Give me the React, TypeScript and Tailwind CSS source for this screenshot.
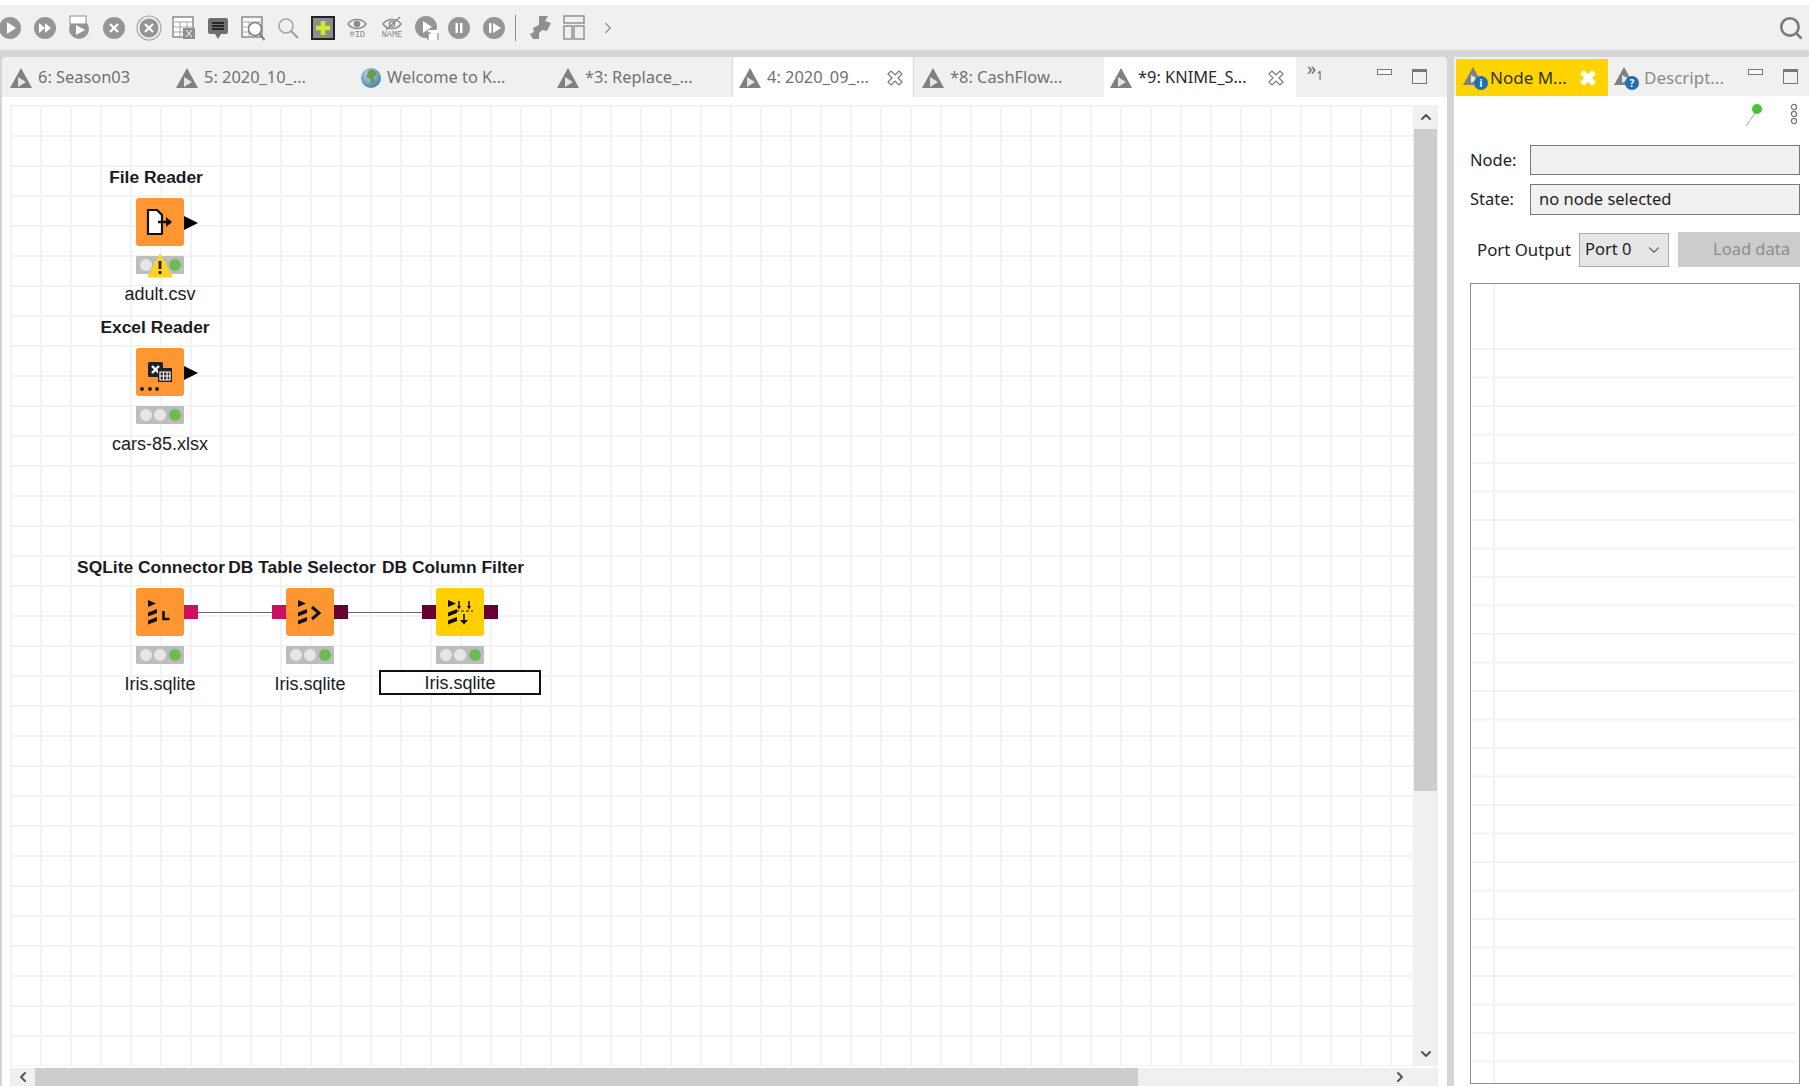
import { ReactNode } from "react";
import { ChevronDown, ChevronLeft, ChevronRight, ChevronUp, Search } from "lucide-react";

function Round({ children }: { children?: ReactNode }) {
  return (
    <svg width="24" height="24" viewBox="0 0 24 24">
      <circle cx="12" cy="12" r="11" fill="#959595" />
      {children}
    </svg>
  );
}

function Sheet({ children }: { children?: ReactNode }) {
  return (
    <svg width="26" height="26" viewBox="0 0 26 26" fill="none">
      <rect x="2" y="2" width="20" height="20" fill="#fff" stroke="#8a8a8a" strokeWidth="1.5" />
      <path d="M2 7h20M2 12h20M2 17h20M9 7v15M16 7v15" stroke="#a5a5a5" />
      {children}
    </svg>
  );
}

function Toolbar() {
  return (
    <div className="h-[45px] bg-[#f0f0f0] flex items-center pl-[1px] pr-[5px] shrink-0">
      <div className="flex items-center -ml-[8px]">
        <Slot><Round><path d="M9 6l9 6-9 6z" fill="#fff" /></Round></Slot>
        <Slot><Round><path d="M6 7l6 5-6 5zM12 7l6 5-6 5z" fill="#fff" /></Round></Slot>
        <Slot>
          <svg width="26" height="26" viewBox="0 0 26 26">
            <circle cx="12" cy="14" r="10" fill="#959595" />
            <rect x="3" y="1" width="16" height="8" fill="#fff" stroke="#8f8f8f" />
            <path d="M9 10l9 5-9 5z" fill="#fff" />
          </svg>
        </Slot>
        <Slot><Round><path d="M8 8l8 8M16 8l-8 8" stroke="#fff" strokeWidth="2.4" /></Round></Slot>
        <Slot>
          <svg width="26" height="26" viewBox="0 0 26 26" fill="none">
            <circle cx="13" cy="13" r="12" stroke="#a5a5a5" strokeWidth="1.2" />
            <circle cx="13" cy="13" r="9.5" fill="#959595" />
            <path d="M9 9l8 8M17 9l-8 8" stroke="#fff" strokeWidth="2.2" />
          </svg>
        </Slot>
        <Slot>
          <Sheet><rect x="12" y="13" width="12" height="11" fill="#8f8f8f" /><path d="M15 15l6 7M21 15l-6 7" stroke="#fff" /></Sheet>
        </Slot>
        <Slot>
          <svg width="24" height="26" viewBox="0 0 24 26">
            <path d="M4 3h16a2 2 0 0 1 2 2v12a2 2 0 0 1-2 2h-5l-3 5-3-5H4a2 2 0 0 1-2-2V5a2 2 0 0 1 2-2z" fill="#6f6f6f" />
            <path d="M6 8h12M6 11h12M6 14h12" stroke="#111" strokeWidth="1.5" />
          </svg>
        </Slot>
        <Slot>
          <Sheet><circle cx="15" cy="14" r="6.5" fill="#fff" stroke="#808080" strokeWidth="1.6" /><path d="M19.5 19l5 6" stroke="#808080" strokeWidth="2" /></Sheet>
        </Slot>
        <Slot>
          <svg width="24" height="24" viewBox="0 0 24 24" fill="none">
            <circle cx="10" cy="10" r="7" stroke="#a5a5a5" strokeWidth="1.6" />
            <path d="M15 15l7 7" stroke="#a5a5a5" strokeWidth="2.4" />
          </svg>
        </Slot>
        <Slot>
          <svg width="24" height="24" viewBox="0 0 24 24">
            <rect x="1" y="1" width="22" height="22" fill="#8c8c8c" stroke="#222" strokeWidth="2" />
            <path d="M12 5v14M5 12h14" stroke="#c6f02c" strokeWidth="4.5" />
          </svg>
        </Slot>
        <Slot><Tag text="#ID" open /></Slot>
        <Slot><Tag text="NAME" /></Slot>
        <Slot>
          <svg width="26" height="26" viewBox="0 0 26 26">
            <circle cx="12" cy="12" r="11" fill="#959595" />
            <path d="M9 6l9 6-9 6z" fill="#fff" />
            <rect x="14" y="15" width="11" height="10" fill="#fff" />
            <path d="M14 25v-7h3M24 25v-7" stroke="#777" fill="none" />
          </svg>
        </Slot>
        <div className="-ml-[2px]">
          <Slot><Round><rect x="8.5" y="7" width="2.4" height="10" fill="#fff" /><rect x="13" y="7" width="2.4" height="10" fill="#fff" /></Round></Slot>
        </div>
        <Slot><Round><rect x="7" y="7" width="2.4" height="10" fill="#fff" /><path d="M11 7l8 5-8 5z" fill="#fff" /></Round></Slot>
        <div className="w-[1px] h-[26px] bg-[#8f8f8f] ml-[4px] mr-[8px]" />
        <div className="w-[32px] flex justify-center">
          <svg width="26" height="26" viewBox="0 0 26 26">
            <path d="M12 1h9l-3 5 6 2-4 8-5-1-3 3v6H6l-3-5 4-2-1-4 6-3z" fill="#8f8f8f" />
          </svg>
        </div>
        <Slot>
          <svg width="24" height="26" viewBox="0 0 24 26" fill="none" stroke="#8a8a8a" strokeWidth="1.4">
            <rect x="2" y="1" width="20" height="7" />
            <rect x="2" y="11" width="8" height="13" />
            <rect x="12" y="11" width="10" height="13" />
          </svg>
        </Slot>
        <Slot><ChevronRight size={18} color="#8a8a8a" strokeWidth={1.5} /></Slot>
      </div>
      <Search size={26} color="#7b7b7b" strokeWidth={2.4} className="ml-auto" />
    </div>
  );
}

function Slot({ children }: { children: ReactNode }) {
  return <div className="w-[34.7px] h-[30px] flex items-center justify-center">{children}</div>;
}

function Tag({ text, open }: { text: string; open?: boolean }) {
  return (
    <div className="flex flex-col items-center leading-none">
      <svg width="24" height="15" viewBox="0 0 24 15" fill="none" stroke="#8a8a8a" strokeWidth="1.4">
        <path d="M3 8c4-6 14-6 18 0-4 6-14 6-18 0z" />
        <circle cx="12" cy="8" r="2.6" fill={open ? "#8a8a8a" : "none"} />
        {!open && <path d="M6 14L20 1" />}
      </svg>
      <span className="text-[9px] text-[#8a8a8a] font-['Liberation_Mono',monospace] tracking-tight">{text}</span>
    </div>
  );
}

function Flow() {
  return (
    <svg width="24" height="22" viewBox="0 0 24 22" className="shrink-0">
      <path d="M12 1l11 20H1z" fill="#808080" />
      <path d="M9 10l8 5-8 5z" fill="#e6e6e6" />
    </svg>
  );
}

function Globe() {
  return (
    <svg width="22" height="22" viewBox="0 0 22 22" className="shrink-0">
      <defs>
        <radialGradient id="sea" cx="0.4" cy="0.35" r="0.8">
          <stop offset="0" stopColor="#bcdcf2" />
          <stop offset="1" stopColor="#2f6f9f" />
        </radialGradient>
      </defs>
      <circle cx="11" cy="11" r="10" fill="url(#sea)" />
      <path d="M9 3c4-1 7 1 8 4l-3 3 1 5-3 3-2-6-4-2z" fill="#6f9a4a" />
    </svg>
  );
}

function Close({ color = "#7a7a7a", fill = "none" }: { color?: string; fill?: string }) {
  return (
    <svg width="18" height="18" viewBox="0 0 18 18" fill={fill} stroke={color} strokeWidth="1.2">
      <path d="M2 5l3-3 4 4 4-4 3 3-4 4 4 4-3 3-4-4-4 4-3-3 4-4z" />
    </svg>
  );
}

function EditorTabs() {
  return (
    <div className="h-[40px] flex items-stretch pl-[1px] text-[16.4px] text-[#707070] shrink-0">
      <div className="w-[166px] flex items-center gap-[5px] pl-[6px] pt-[1px]"><Flow />6: Season03</div>
      <div className="w-[185px] flex items-center gap-[5px] pl-[6px] pt-[1px]"><Flow />5: 2020_10_...</div>
      <div className="w-[196px] flex items-center gap-[5px] pl-[6px] pt-[1px]"><Globe />Welcome to K...</div>
      <div className="w-[182px] flex items-center gap-[5px] pl-[6px] pt-[1px]"><Flow />*3: Replace_...</div>
      <div className="w-[182px] flex items-center gap-[5px] pl-[5px] pt-[1px] bg-white border-x border-[#d8d8e4] rounded-t-[3px]">
        <Flow />4: 2020_09_...
        <span className="ml-auto mr-[9px]"><Close /></span>
      </div>
      <div className="w-[190px] flex items-center gap-[5px] pl-[7px] pt-[1px]"><Flow />*8: CashFlow...</div>
      <div className="w-[192px] flex items-center gap-[5px] pl-[5px] pt-[1px] bg-white text-[#2a2a2a]">
        <Flow />*9: KNIME_S...
        <span className="ml-auto mr-[11px]"><Close /></span>
      </div>
      <div className="w-[81px] flex items-start pl-[11px] pt-[1px] text-[#666] text-[18px] leading-[20px]">
        »<span className="text-[12px] mt-[8px]">1</span>
      </div>
      <WinButtons />
    </div>
  );
}

function WinButtons() {
  return (
    <div className="flex items-center gap-[20px] pb-[7px]">
      <div className="w-[15px] h-[6px] border border-[#777] bg-[#f8f8f8] -mt-[4px]" />
      <div className="w-[15px] h-[15px] border border-[#777] border-t-[3px] mt-[5px]" />
    </div>
  );
}

function Lights() {
  return (
    <div className="w-[48px] h-[18px] bg-[#bdbdbd] rounded-[1px] flex items-center justify-center gap-[2.5px]">
      <span className="w-[12px] h-[12px] rounded-full bg-[#e6e6e6]" />
      <span className="w-[12px] h-[12px] rounded-full bg-[#e6e6e6]" />
      <span className="w-[12px] h-[12px] rounded-full bg-[#6cbb55]" />
    </div>
  );
}

function Node({
  title,
  titleShift,
  label,
  color,
  icon,
  left,
  right,
  warning,
  selected,
}: {
  title: string;
  titleShift: string;
  label: string;
  color: string;
  icon: ReactNode;
  left?: ReactNode;
  right?: ReactNode;
  warning?: boolean;
  selected?: boolean;
}) {
  return (
    <div className="w-[48px] flex flex-col items-center text-[#1b1b1f] font-['Liberation_Sans',sans-serif]">
      <div className={`h-[21px] leading-[21px] font-bold text-[17.4px] whitespace-nowrap ${titleShift}`}>{title}</div>
      <div className={`relative w-[48px] h-[48px] mt-[10px] rounded-[3px] flex items-center justify-center ${color}`}>
        {icon}
        {left}
        {right}
      </div>
      <div className="relative mt-[10px]">
        <Lights />
        {warning && (
          <svg width="26" height="25" viewBox="0 0 26 25" className="absolute left-[11px] -top-[3px]">
            <path d="M13 1l12 23H1z" fill="#ffd21f" stroke="#ffd21f" strokeLinejoin="round" />
            <rect x="11.6" y="8" width="2.8" height="8" fill="#222" />
            <rect x="11.6" y="18" width="2.8" height="3" fill="#222" />
          </svg>
        )}
      </div>
      <div
        className={
          selected
            ? "mt-[6px] w-[162px] h-[25px] pt-[1px] text-[18px] whitespace-nowrap flex items-center justify-center border-2 border-[#111] bg-white"
            : "mt-[10px] h-[20px] leading-[20px] text-[18px] whitespace-nowrap flex items-center justify-center"
        }
      >
        {label}
      </div>
    </div>
  );
}

function DataOut() {
  return (
    <svg width="14" height="14" viewBox="0 0 14 14" className="absolute -right-[14px] top-[18px]">
      <path d="M0 0l14 7-14 7z" fill="#000" />
    </svg>
  );
}

function Port({ side, color }: { side: "l" | "r"; color: string }) {
  return <div className={`absolute top-[17px] w-[14px] h-[14px] ${side === "l" ? "-left-[14px]" : "-right-[14px]"} ${color}`} />;
}

function DbStack() {
  return (
    <g fill="#111">
      <path d="M12 12l8 3.5-8 3.5z" />
      <path d="M12 24.5l9-3.5v4l-9 3.5zM12 32.5l9-3.5v4l-9 3.5z" />
    </g>
  );
}

function Canvas() {
  return (
    <div className="relative flex-1 overflow-hidden bg-white bg-[linear-gradient(to_right,#f3f3f5_2px,transparent_2px),linear-gradient(to_bottom,#f3f3f5_2px,transparent_2px)] bg-[size:30px_30px]">
      <div className="absolute left-[126px] top-[62px]">
        <Node
          title="File Reader"
          titleShift="-translate-x-[4px]"
          label="adult.csv"
          color="bg-[#ff9632]"
          warning
          right={<DataOut />}
          icon={
            <svg width="30" height="26" viewBox="0 0 30 26" fill="none">
              <path d="M3 1h9l5 5v19H3z" fill="#fff" stroke="#111" strokeWidth="2.2" />
              <path d="M13 13h13" stroke="#111" strokeWidth="2.6" />
              <path d="M21 8l6 5-6 5z" fill="#111" />
            </svg>
          }
        />
      </div>
      <div className="absolute left-[126px] top-[212px]">
        <Node
          title="Excel Reader"
          titleShift="-translate-x-[5px]"
          label="cars-85.xlsx"
          color="bg-[#ff9632]"
          right={<DataOut />}
          icon={
            <svg width="48" height="48" viewBox="0 0 48 48">
              <rect x="12" y="14" width="15" height="15" rx="1.5" fill="#222" />
              <path d="M16 18l7 7M23 18l-7 7" stroke="#fff" strokeWidth="2.4" />
              <rect x="22" y="20" width="14" height="14" fill="#222" />
              <path d="M24 24h10v8H24zM27.5 24v8M31 24v8M24 28h10" stroke="#fff" strokeWidth="1.2" fill="none" />
              <circle cx="6" cy="41" r="2" fill="#222" />
              <circle cx="14" cy="41" r="2" fill="#222" />
              <circle cx="21" cy="41" r="2" fill="#222" />
            </svg>
          }
        />
      </div>
      <div className="absolute left-[188px] top-[507px] w-[74px] h-[1px] bg-[#666]" />
      <div className="absolute left-[338px] top-[507px] w-[75px] h-[1px] bg-[#666]" />
      <div className="absolute left-[126px] top-[452px]">
        <Node
          title="SQLite Connector"
          titleShift="-translate-x-[9px]"
          label="Iris.sqlite"
          color="bg-[#ff9632]"
          right={<Port side="r" color="bg-[#cc0f5f]" />}
          icon={
            <svg width="48" height="48" viewBox="0 0 48 48">
              <DbStack />
              <path d="M27.5 23v8h6" fill="none" stroke="#111" strokeWidth="2.6" />
            </svg>
          }
        />
      </div>
      <div className="absolute left-[276px] top-[452px]">
        <Node
          title="DB Table Selector"
          titleShift="-translate-x-[8px]"
          label="Iris.sqlite"
          color="bg-[#ff9632]"
          left={<Port side="l" color="bg-[#cc0f5f]" />}
          right={<Port side="r" color="bg-[#660033]" />}
          icon={
            <svg width="48" height="48" viewBox="0 0 48 48">
              <DbStack />
              <path d="M26 19l7 6-7 6" fill="none" stroke="#111" strokeWidth="3" />
            </svg>
          }
        />
      </div>
      <div className="absolute left-[426px] top-[452px]">
        <Node
          title="DB Column Filter"
          titleShift="-translate-x-[7px]"
          label="Iris.sqlite"
          color="bg-[#ffcf00]"
          selected
          left={<Port side="l" color="bg-[#660033]" />}
          right={<Port side="r" color="bg-[#660033]" />}
          icon={
            <svg width="48" height="48" viewBox="0 0 48 48">
              <DbStack />
              <path d="M20 23h17" stroke="#111" strokeWidth="1" strokeDasharray="3 2" />
              <path d="M23 13v5M33 13v5M28 26v7" stroke="#111" strokeWidth="1.6" />
              <path d="M21 18h4l-2 3.5zM31 18h4l-2 3.5zM24 32h8l-4 4.5z" fill="#111" />
            </svg>
          }
        />
      </div>
    </div>
  );
}

function EditorArea() {
  return (
    <div className="flex-1 flex flex-col bg-white pl-[8px] pr-[9px] pt-[8px] min-h-0">
      <div className="flex flex-1 min-h-0">
        <Canvas />
        <div className="w-[25px] bg-[#f0f0f0] flex flex-col items-center">
          <div className="h-[24px] w-full flex items-center justify-center">
            <ChevronUp size={16} color="#555" strokeWidth={3} />
          </div>
          <div className="w-[23px] mr-[1px] h-[662px] bg-[#cdcdcd]" />
          <div className="mt-auto h-[24px] w-full flex items-center justify-center">
            <ChevronDown size={16} color="#555" strokeWidth={3} />
          </div>
        </div>
      </div>
      <div className="h-[18px] mt-[2px] bg-[#f0f0f0] flex items-center shrink-0">
        <div className="w-[25px] flex justify-center">
          <ChevronLeft size={16} color="#555" strokeWidth={3} />
        </div>
        <div className="w-[1103px] h-full bg-[#cdcdcd]" />
        <div className="ml-auto w-[49px] flex justify-start pl-[3px]">
          <ChevronRight size={16} color="#555" strokeWidth={3} />
        </div>
      </div>
    </div>
  );
}

function Badge({ mark }: { mark: string }) {
  return (
    <div className="relative w-[26px] h-[24px] shrink-0">
      <svg width="22" height="20" viewBox="0 0 22 20" className="absolute left-0 top-0">
        <path d="M11 1l10 18H1z" fill="#808080" />
        <path d="M9 9l7 4-7 4z" fill="#e6e6e6" />
      </svg>
      <div className="absolute right-0 bottom-0 w-[14px] h-[14px] rounded-full bg-[#1f6fb2] text-white text-[10px] leading-[14px] text-center font-bold">
        {mark}
      </div>
    </div>
  );
}

function SidePanel() {
  return (
    <div className="flex-1 bg-white flex flex-col min-w-0 text-[16.5px] text-[#222]">
      <div className="h-[39px] bg-[#f0f0f0] flex items-stretch pt-[2px] shrink-0">
        <div className="ml-[2px] w-[152px] bg-[#ffd400] flex items-center pl-[6px] gap-[2px]">
          <Badge mark="i" />
          <span className="text-[17px] text-[#333]">Node M...</span>
          <span className="ml-auto mr-[11px]"><Close color="#fff" fill="#fff" /></span>
        </div>
        <div className="flex items-center pl-[5px] gap-[5px] text-[#8a8a8a] text-[17px] w-[140px]">
          <Badge mark="?" />
          Descript...
        </div>
        <WinButtons />
      </div>
      <div className="flex-1 flex flex-col pl-[16px] pr-[9px] pb-[2px] min-h-0">
        <div className="flex justify-end items-start gap-[27px] pr-[2px] pt-[7px] h-[48px]">
          <svg width="18" height="24" viewBox="0 0 18 24" fill="none">
            <path d="M1 23l10-14" stroke="#aaa" />
            <circle cx="12" cy="6" r="5" fill="#4cc23a" />
          </svg>
          <svg width="8" height="22" viewBox="0 0 8 22" fill="none" stroke="#777" strokeWidth="1.2">
            <circle cx="4" cy="4" r="2.6" />
            <circle cx="4" cy="11" r="2.6" />
            <circle cx="4" cy="18" r="2.6" />
          </svg>
        </div>
        <div className="flex items-center h-[30px] mt-[1px]">
          <span className="w-[60px]">Node:</span>
          <div className="flex-1 h-full border border-[#777] bg-[#f0f0f0]" />
        </div>
        <div className="flex items-center h-[31px] mt-[9px]">
          <span className="w-[60px]">State:</span>
          <div className="flex-1 h-full border border-[#777] bg-[#f0f0f0] flex items-center pl-[8px]">no node selected</div>
        </div>
        <div className="flex items-center h-[35px] mt-[17px] pl-[7px]">
          <span className="w-[102px] text-[16.8px]">Port Output</span>
          <div className="w-[90px] h-[34px] border border-[#aaa] bg-[#e6e6e6] flex items-center pl-[5px] justify-between pr-[5px]">
            Port 0
            <ChevronDown size={18} color="#666" strokeWidth={1.5} />
          </div>
          <div className="ml-[9px] flex-1 h-full bg-[#cccccc] text-[#8c8c8c] flex items-center justify-end pr-[10px]">Load data</div>
        </div>
        <div className="flex-1 mt-[16px] border border-[#8f8f98] bg-white flex flex-col pl-[1px] pr-[2px] pb-[4px] bg-[linear-gradient(to_right,transparent_22px,#f2f2f2_22px,#f2f2f2_24px,transparent_24px)]">
          <div className="mt-[64px] flex-1 bg-[linear-gradient(to_bottom,#f3f3f3_2px,transparent_2px)] bg-[size:100%_28.5px]" />
        </div>
      </div>
    </div>
  );
}

export default function App() {
  return (
    <div className="w-[1809px] h-[1086px] overflow-hidden flex flex-col bg-[#d5d5d5] font-['Noto_Sans',sans-serif]">
      <div className="h-[5px] bg-white shrink-0" />
      <Toolbar />
      <div className="flex flex-1 pt-[7px] pl-[2px] min-h-0">
        <div className="w-[1445px] flex flex-col rounded-t-[4px] overflow-hidden bg-[#f0f0f0]">
          <EditorTabs />
          <EditorArea />
        </div>
        <div className="w-[7px]" />
        <SidePanel />
      </div>
    </div>
  );
}
